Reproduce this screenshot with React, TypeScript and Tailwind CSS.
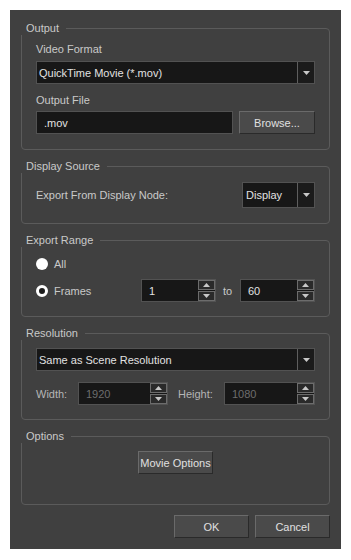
import type { ReactNode } from 'react';

// Boîte de dialogue d'export de film (thème sombre)

const font = "font-['Liberation_Sans',Arial,sans-serif] text-[11px] leading-[14px]";

function Group({ title, className, children }: { title: string; className?: string; children: ReactNode }) {
  return (
    <div className={`relative rounded-[4px] border border-[#5b5b5b] ${className ?? ''}`}>
      <span className="absolute -top-[8px] -left-px bg-[#404040] pl-[5px] pr-[7px] text-[#c9c9c9]">{title}</span>
      {children}
    </div>
  );
}

function Arrow({ up }: { up?: boolean }) {
  return (
    <svg width="7" height="4" viewBox="0 0 7 4">
      <path d={up ? 'M0 4 L3.5 0 L7 4 Z' : 'M0 0 L7 0 L3.5 4 Z'} fill="#c8c8c8" />
    </svg>
  );
}

function Combo({ value, className }: { value: string; className?: string }) {
  return (
    <div className={`flex border border-[#525252] bg-[#171717] ${className ?? ''}`}>
      <div className="flex flex-1 items-center pl-[2px] text-[#e2e2e2]">{value}</div>
      <div className="flex w-[17px] items-center justify-center border-l border-[#5e5e5e] bg-[#1b1b1b]">
        <Arrow />
      </div>
    </div>
  );
}

function Spin({ value, disabled, className }: { value: string; disabled?: boolean; className?: string }) {
  return (
    <div className={`flex h-[23px] border border-[#525252] bg-[#171717] ${className ?? ''}`}>
      <div className={`flex flex-1 items-center pl-[7px] ${disabled ? 'text-[#6d6d6d]' : 'text-[#e2e2e2]'}`}>
        {value}
      </div>
      <div className="flex w-[17px] flex-col gap-px">
        <div className="flex flex-1 items-center justify-center border border-[#6c6c6c] bg-[#2a2a2a]">
          <Arrow up />
        </div>
        <div className="flex flex-1 items-center justify-center border border-[#6c6c6c] bg-[#2a2a2a]">
          <Arrow />
        </div>
      </div>
    </div>
  );
}

function Button({ label, className }: { label: string; className?: string }) {
  return (
    <button
      className={`flex h-[23px] w-[75px] items-center justify-center border border-t-[#6a6a6a] border-l-[#6a6a6a] border-b-[#2a2a2a] border-r-[#2a2a2a] bg-[#4a4a4a] text-[#e0e0e0] ${className ?? ''}`}
    >
      {label}
    </button>
  );
}

export default function App() {
  return (
    <div className={`h-[560px] w-[351px] bg-white p-[10px] ${font}`}>
      <div className="flex h-[539px] w-[331px] flex-col bg-[#404040] px-[11px] pb-[11px] pt-[18px] text-[#c9c9c9]">
        {/* Output */}
        <Group title="Output" className="h-[122px] px-[14px] pb-[15px] pt-[13px]">
          <div className="pl-[-1px]">Video Format</div>
          <Combo value="QuickTime Movie (*.mov)" className="mt-[5px] h-[23px]" />
          <div className="mt-[9px]">Output File</div>
          <div className="mt-[4px] flex h-[23px] gap-[6px]">
            <div className="flex flex-1 items-center border border-[#525252] bg-[#171717] pl-[7px] text-[#e2e2e2]">
              .mov
            </div>
            <Button label="Browse..." className="w-[76px]" />
          </div>
        </Group>

        {/* Display Source */}
        <Group title="Display Source" className="mt-[16px] flex h-[58px] items-center justify-between px-[14px]">
          <div>Export From Display Node:</div>
          <Combo value="Display" className="h-[26px] w-[73px] [&>div:first-child]:pl-[3px]" />
        </Group>

        {/* Export Range */}
        <Group title="Export Range" className="mt-[16px] h-[77px] px-[14px] pt-[16px]">
          <div className="flex h-[14px] items-center gap-[6px]">
            <div className="h-[12px] w-[12px] rounded-full bg-white" />
            <span>All</span>
          </div>
          <div className="mt-[8px] flex h-[23px] items-center">
            <div className="flex w-[105px] items-center gap-[6px]">
              <div className="h-[12px] w-[12px] rounded-full border-[3px] border-white bg-[#1c1c1c]" />
              <span>Frames</span>
            </div>
            <Spin value="1" className="w-[75px]" />
            <div className="w-[24px] pl-[7px]">to</div>
            <Spin value="60" className="w-[75px]" />
          </div>
        </Group>

        {/* Resolution */}
        <Group title="Resolution" className="mt-[16px] h-[87px] px-[14px] pt-[14px]">
          <Combo value="Same as Scene Resolution" className="h-[23px]" />
          <div className="mt-[11px] flex h-[23px] items-center">
            <div className="w-[42px] text-[#b5b5b5]">Width:</div>
            <Spin value="1920" disabled className="w-[90px]" />
            <div className="w-[56px] pl-[10px] text-[#b5b5b5]">Height:</div>
            <Spin value="1080" disabled className="w-[91px]" />
          </div>
        </Group>

        {/* Options */}
        <Group title="Options" className="mt-[16px] flex h-[69px] justify-center pt-[14px]">
          <Button label="Movie Options" />
        </Group>

        <div className="mt-[10px] flex justify-end gap-[6px]">
          <Button label="OK" />
          <Button label="Cancel" />
        </div>
      </div>
    </div>
  );
}
